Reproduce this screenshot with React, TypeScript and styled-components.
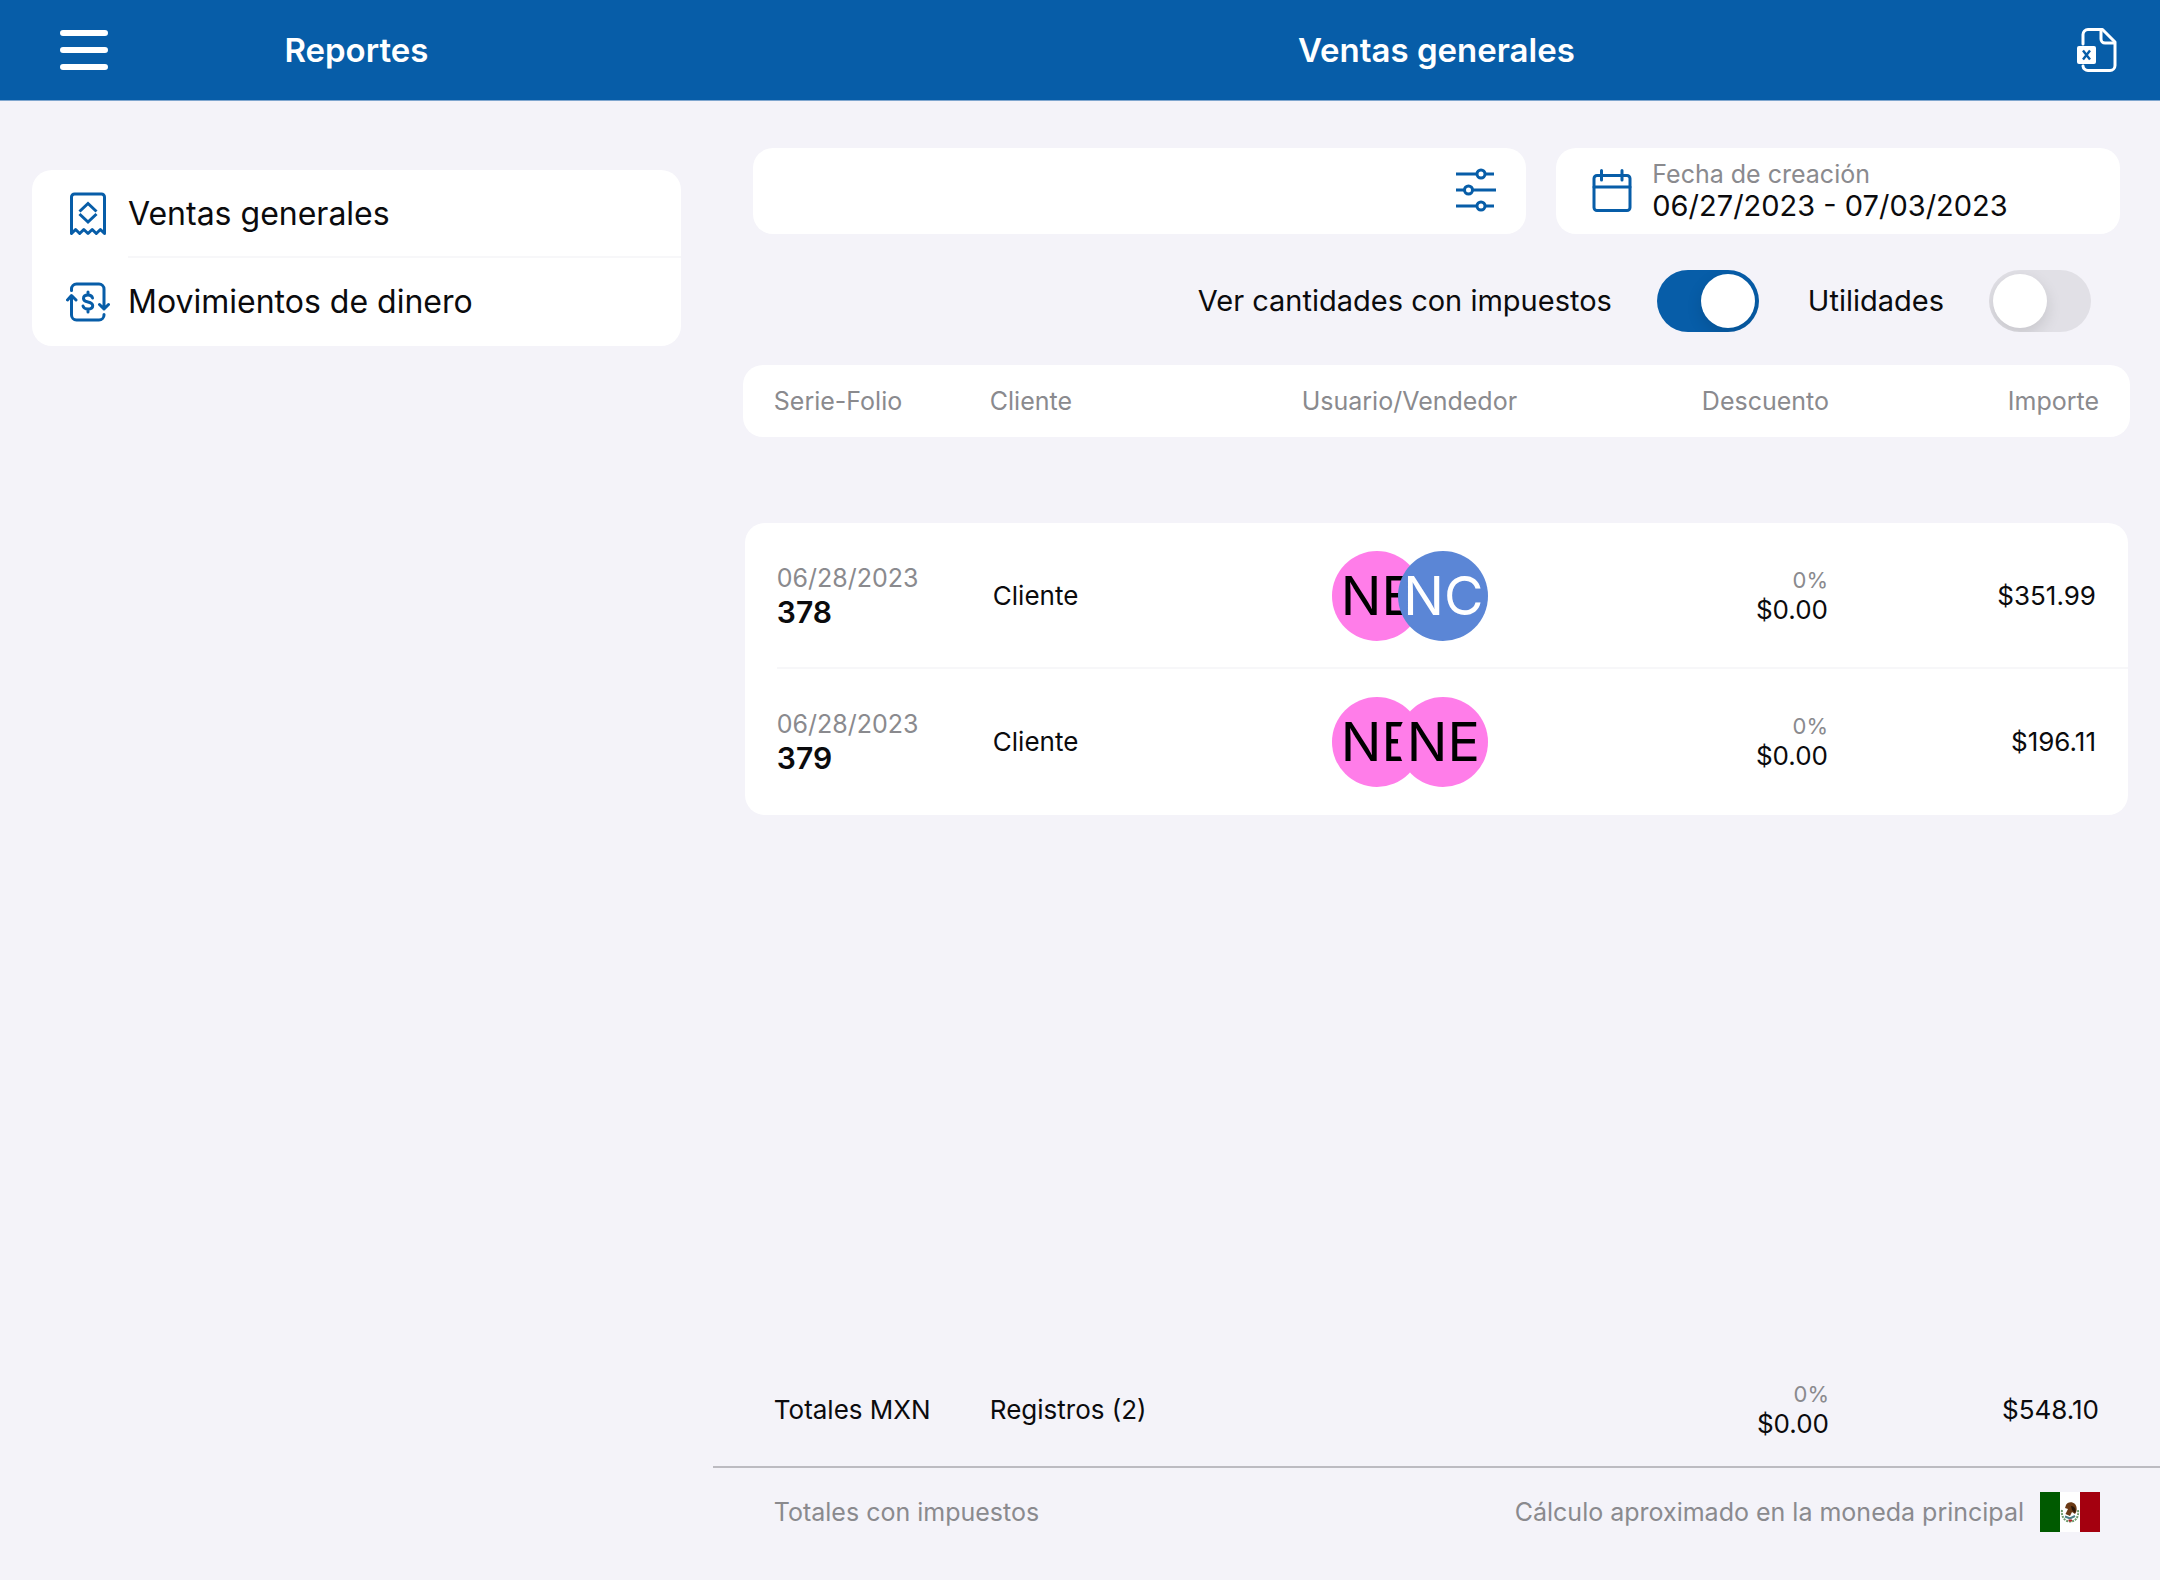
import { useState } from "react";
import type { ReactNode } from "react";
import styled, { createGlobalStyle } from "styled-components";

const color = {
  brand: "#075da8",
  page: "#f4f3f9",
  card: "#ffffff",
  text: "#0b0b0d",
  muted: "#8a8a8e",
  hairline: "#f7f7f9",
  divider: "#bcbbc1",
  pink: "#ff7de9",
  blue: "#5b86d6",
};

const GlobalStyle = createGlobalStyle`
  *, *::before, *::after { box-sizing: border-box; }
  body {
    margin: 0;
    background: ${color.page};
    color: ${color.text};
    font-family: Inter, "Liberation Sans", sans-serif;
    font-size: 26px;
    line-height: 32px;
  }
  button, input { font: inherit; color: inherit; }
`;

const Page = styled.div`
  display: grid;
  grid-template-columns: 33% 1fr;
  grid-template-rows: auto 1fr;
  min-height: 100vh;
`;

const Bar = styled.header<{ $side?: boolean }>`
  display: grid;
  grid-template-columns: 48px 1fr 48px;
  align-items: center;
  height: 101px;
  padding: 0 ${(p) => (p.$side ? "60px" : "40px")};
  background: ${color.brand};
  border-bottom: 1px solid #7fa6cf;
  color: #fff;
`;

const BarTitle = styled.h1`
  grid-column: 2;
  margin: 0;
  text-align: center;
  font-size: 33px;
  line-height: 40px;
  font-weight: 600;
`;

const IconButton = styled.button`
  display: flex;
  justify-content: center;
  padding: 0;
  border: 0;
  background: none;
  cursor: pointer;
`;

const Sidebar = styled.nav`
  padding: 69px 32px;
`;

const Menu = styled.ul`
  margin: 0;
  padding: 0;
  list-style: none;
  background: ${color.card};
  border-radius: 20px;
`;

const MenuItem = styled.li`
  &:not(:last-child) a span {
    border-bottom: 2px solid ${color.hairline};
  }
`;

const MenuLink = styled.a`
  display: grid;
  grid-template-columns: 44px 1fr;
  column-gap: 18px;
  align-items: center;
  padding-left: 34px;
  color: inherit;
  text-decoration: none;
  font-size: 32px;
  line-height: 40px;

  span {
    height: 88px;
    padding: 24px 0 22px;
  }
`;

const Main = styled.main`
  display: flex;
  flex-direction: column;
`;

const Filters = styled.div`
  display: grid;
  grid-template-columns: 774fr 564fr;
  gap: 30px;
  padding: 47px 40px 0;
`;

const SearchBox = styled.div`
  display: flex;
  align-items: center;
  height: 86px;
  padding: 0 28px 2px;
  background: ${color.card};
  border-radius: 20px;
`;

const SearchInput = styled.input`
  flex: 1;
  min-width: 0;
  height: 60px;
  border: 0;
  outline: 0;
  background: none;
`;

const DateButton = styled.button`
  display: flex;
  align-items: center;
  gap: 18px;
  height: 86px;
  padding: 0 34px 2px;
  border: 0;
  background: ${color.card};
  border-radius: 20px;
  text-align: left;
  cursor: pointer;
`;

const DateText = styled.span`
  display: flex;
  flex-direction: column;
  font-size: 29px;
`;

const Caption = styled.span<{ $small?: boolean }>`
  font-size: ${(p) => (p.$small ? "22px" : "25px")};
  line-height: ${(p) => (p.$small ? "28px" : "32px")};
  color: ${color.muted};
`;

const Switches = styled.div`
  display: flex;
  justify-content: flex-end;
  gap: 49px;
  padding: 36px 69px 33px 0;
`;

const SwitchLabel = styled.label`
  display: flex;
  align-items: center;
  gap: 45px;
  font-size: 29px;
`;

const Switch = styled.input`
  appearance: none;
  display: flex;
  align-items: center;
  overflow: hidden;
  width: 102px;
  height: 62px;
  margin: 0;
  padding: 4px;
  border-radius: 31px;
  background: #e1e0e6;
  cursor: pointer;

  &::before {
    content: "";
    width: 54px;
    height: 54px;
    border-radius: 50%;
    background: #fff;
    box-shadow: 0 6px 16px rgba(0, 0, 0, 0.12);
  }

  &:checked {
    justify-content: flex-end;
    background: ${color.brand};
  }
`;

const Table = styled.table`
  display: flex;
  flex: 1;
  flex-direction: column;
`;

const Head = styled.thead`
  display: block;
  margin: 0 30px;
  padding: 20px 31px;
  background: ${color.card};
  border-radius: 20px;
  color: ${color.muted};
  font-size: 25px;
`;

const Body = styled.tbody`
  display: block;
  margin: 86px 32px 0;
  background: ${color.card};
  border-radius: 20px;
`;

const Foot = styled.tfoot`
  display: block;
  margin-top: auto;
  padding: 30px 61px 26px;
  border-bottom: 2px solid ${color.divider};
`;

const Row = styled.tr`
  display: grid;
  grid-template-columns: 216px 1fr 1fr 1fr 270px;
  align-items: center;
`;

const BodyRow = styled(Row)`
  grid-template-columns: 216px 1fr 1fr 1fr 268px;
  margin-left: 32px;
  padding-right: 32px;
  height: 146px;

  &:not(:last-child) {
    box-shadow: inset 0 -2px ${color.hairline};
  }
`;

type Align = "left" | "center" | "right";

const HeadCell = styled.th<{ $align?: Align }>`
  padding: 0;
  font-weight: 400;
  text-align: ${(p) => p.$align ?? "left"};
`;

const Cell = styled.td<{ $align?: Align }>`
  padding: 0;
  text-align: ${(p) => p.$align ?? "left"};
`;

const Stack = styled.div`
  display: flex;
  flex-direction: column;
`;

const Folio = styled.strong`
  font-size: 30px;
  line-height: 36px;
  font-weight: 600;
`;

const Avatars = styled.div`
  display: flex;
  justify-content: center;
`;

const Avatar = styled.span<{ $bg: string; $fg: string }>`
  display: flex;
  align-items: center;
  justify-content: center;
  width: 90px;
  height: 90px;
  border-radius: 50%;
  background: ${(p) => p.$bg};
  color: ${(p) => p.$fg};
  font-size: 54px;
  line-height: 64px;

  & + & {
    margin-left: -24px;
  }
`;

const Notes = styled.footer`
  display: flex;
  align-items: center;
  gap: 16px;
  padding: 24px 60px 48px 61px;
  color: ${color.muted};
  font-size: 25px;
`;

const NoteText = styled.span<{ $grow?: boolean }>`
  flex: ${(p) => (p.$grow ? "1" : "none")};
`;

const Icon = ({ children }: { children: ReactNode }) => (
  <svg
    width="44"
    height="44"
    viewBox="0 0 44 44"
    fill="none"
    stroke={color.brand}
    strokeWidth="3"
    strokeLinecap="round"
    strokeLinejoin="round"
    aria-hidden="true"
  >
    {children}
  </svg>
);

const MenuIcon = () => (
  <svg width="48" height="40" viewBox="0 0 48 40" stroke="#fff" strokeWidth="6" strokeLinecap="round" aria-hidden="true">
    <path d="M3 3H45M3 20H45M3 37H45" />
  </svg>
);

const ExcelIcon = () => (
  <svg width="44" height="44" viewBox="0 0 44 44" fill="none" aria-hidden="true">
    <path
      d="M9 16V6.500a5 5 0 0 1 5-5H28.500L41 14V37.500a5 5 0 0 1-5 5H14a5 5 0 0 1-5-4.500"
      stroke="#fff"
      strokeWidth="3"
      strokeLinecap="round"
      strokeLinejoin="round"
    />
    <path d="M27 2V11a4 4 0 0 0 4 4H41" stroke="#fff" strokeWidth="3" strokeLinejoin="round" />
    <rect x="3" y="18" width="19" height="18" rx="2" fill="#fff" />
    <path d="M9 22.500L16 31.500M16 22.500L9 31.500" stroke={color.brand} strokeWidth="2.400" />
  </svg>
);

const ReceiptIcon = () => (
  <Icon>
    <path d="M5.500 41.500V5a3 3 0 0 1 3-3H35.500a3 3 0 0 1 3 3V41.500L34.400 37.500L30.300 41.500L26.200 37.500L22 41.500L17.800 37.500L13.700 41.500L9.600 37.500Z" />
    <path d="M13.500 19.500L22 11.500L30.500 19.500M13.500 22L22 30L30.500 22" strokeLinecap="butt" strokeLinejoin="miter" />
  </Icon>
);

const MoneyIcon = () => (
  <Icon>
    <path d="M5.500 10.500V9a5 5 0 0 1 5-5H33a5 5 0 0 1 5 5V29M33.500 24.500L38 29L42.500 24.500" />
    <path d="M38 34.500V35a5 5 0 0 1-5 5H10.500a5 5 0 0 1-5-5V16M1.500 20L5.500 15.500L10 20" />
    <path d="M26.500 18C26 16 24 15 22 15c-2.800 0-4.500 1.500-4.500 3.400s1.700 3 4.500 3.600s4.700 1.500 4.700 3.700S25 29 22 29c-2.500 0-4.500-1-5-3M22 12V15M22 29V32" />
  </Icon>
);

const FilterIcon = () => (
  <Icon>
    <g strokeLinecap="butt">
      <path d="M2 6H23M31 6H40M2 22H11M19 22H42M2 38H23M31 38H40" />
      <circle cx="27" cy="6" r="4" />
      <circle cx="14.500" cy="22" r="4" />
      <circle cx="27" cy="38" r="4" />
    </g>
  </Icon>
);

const CalendarIcon = () => (
  <Icon>
    <rect x="4" y="7.500" width="36" height="35" rx="3" />
    <path d="M4 19H40M11.500 2.500V12M32 2.500V12" />
  </Icon>
);

const MexicoFlag = () => (
  <svg width="60" height="40" viewBox="0 0 60 40" role="img" aria-label="México">
    <rect width="60" height="40" fill="#fff" />
    <rect width="20" height="40" fill="#005a00" />
    <rect x="40" width="20" height="40" fill="#a4000f" />
    <path d="M22 18C21 25 25 29.500 30 29.500S39 26 38 18" fill="none" stroke="#6c9a6a" strokeWidth="2" strokeDasharray="2 1" />
    <path d="M26 13C27 10 32 9 35 12C37.500 15 37 20 35 22L32 20L30 24L25.500 22L28 17L25 16Z" fill="#6b3a16" />
    <path d="M31 14C35 14 36.500 18 35 21L32 18Z" fill="#2c1608" />
    <path d="M25 24.500L30 26.500L35 24" fill="none" stroke="#4a7f86" strokeWidth="2" />
    <path d="M28.500 28.500H32" stroke="#b0232a" strokeWidth="2" />
  </svg>
);

const menu = [
  { label: "Ventas generales", icon: <ReceiptIcon /> },
  { label: "Movimientos de dinero", icon: <MoneyIcon /> },
];

const people = {
  NE: { bg: color.pink, fg: "#000" },
  NC: { bg: color.blue, fg: "#fff" },
};

type Person = keyof typeof people;

const sales: { date: string; folio: string; client: string; staff: Person[]; percent: string; discount: string; amount: string }[] = [
  { date: "06/28/2023", folio: "378", client: "Cliente", staff: ["NE", "NC"], percent: "0%", discount: "$0.00", amount: "$351.99" },
  { date: "06/28/2023", folio: "379", client: "Cliente", staff: ["NE", "NE"], percent: "0%", discount: "$0.00", amount: "$196.11" },
];

export default function App() {
  const [withTaxes, setWithTaxes] = useState(true);
  const [profits, setProfits] = useState(false);

  return (
    <>
      <GlobalStyle />
      <Page>
        <Bar $side>
          <IconButton type="button" aria-label="Menú">
            <MenuIcon />
          </IconButton>
          <BarTitle>Reportes</BarTitle>
        </Bar>
        <Bar>
          <BarTitle as="h2">Ventas generales</BarTitle>
          <IconButton type="button" aria-label="Exportar a Excel">
            <ExcelIcon />
          </IconButton>
        </Bar>

        <Sidebar>
          <Menu>
            {menu.map((item) => (
              <MenuItem key={item.label}>
                <MenuLink href="#">
                  {item.icon}
                  <span>{item.label}</span>
                </MenuLink>
              </MenuItem>
            ))}
          </Menu>
        </Sidebar>

        <Main>
          <Filters>
            <SearchBox>
              <SearchInput type="search" aria-label="Buscar" />
              <IconButton type="button" aria-label="Filtros">
                <FilterIcon />
              </IconButton>
            </SearchBox>
            <DateButton type="button">
              <CalendarIcon />
              <DateText>
                <Caption>Fecha de creación</Caption>
                06/27/2023 - 07/03/2023
              </DateText>
            </DateButton>
          </Filters>

          <Switches>
            <SwitchLabel>
              Ver cantidades con impuestos
              <Switch type="checkbox" role="switch" checked={withTaxes} onChange={(e) => setWithTaxes(e.target.checked)} />
            </SwitchLabel>
            <SwitchLabel>
              Utilidades
              <Switch type="checkbox" role="switch" checked={profits} onChange={(e) => setProfits(e.target.checked)} />
            </SwitchLabel>
          </Switches>

          <Table>
            <Head>
              <Row>
                <HeadCell scope="col">Serie-Folio</HeadCell>
                <HeadCell scope="col">Cliente</HeadCell>
                <HeadCell scope="col" $align="center">Usuario/Vendedor</HeadCell>
                <HeadCell scope="col" $align="right">Descuento</HeadCell>
                <HeadCell scope="col" $align="right">Importe</HeadCell>
              </Row>
            </Head>
            <Body>
              {sales.map((sale) => (
                <BodyRow key={sale.folio}>
                  <Cell>
                    <Stack>
                      <Caption>{sale.date}</Caption>
                      <Folio>{sale.folio}</Folio>
                    </Stack>
                  </Cell>
                  <Cell>{sale.client}</Cell>
                  <Cell>
                    <Avatars>
                      {sale.staff.map((id, i) => (
                        <Avatar key={i} $bg={people[id].bg} $fg={people[id].fg}>{id}</Avatar>
                      ))}
                    </Avatars>
                  </Cell>
                  <Cell $align="right">
                    <Stack>
                      <Caption $small>{sale.percent}</Caption>
                      <span>{sale.discount}</span>
                    </Stack>
                  </Cell>
                  <Cell $align="right">{sale.amount}</Cell>
                </BodyRow>
              ))}
            </Body>
            <Foot>
              <Row>
                <Cell>Totales MXN</Cell>
                <Cell>Registros (2)</Cell>
                <Cell />
                <Cell $align="right">
                  <Stack>
                    <Caption $small>0%</Caption>
                    <span>$0.00</span>
                  </Stack>
                </Cell>
                <Cell $align="right">$548.10</Cell>
              </Row>
            </Foot>
          </Table>

          <Notes>
            <NoteText $grow>Totales con impuestos</NoteText>
            <NoteText>Cálculo aproximado en la moneda principal</NoteText>
            <MexicoFlag />
          </Notes>
        </Main>
      </Page>
    </>
  );
}
